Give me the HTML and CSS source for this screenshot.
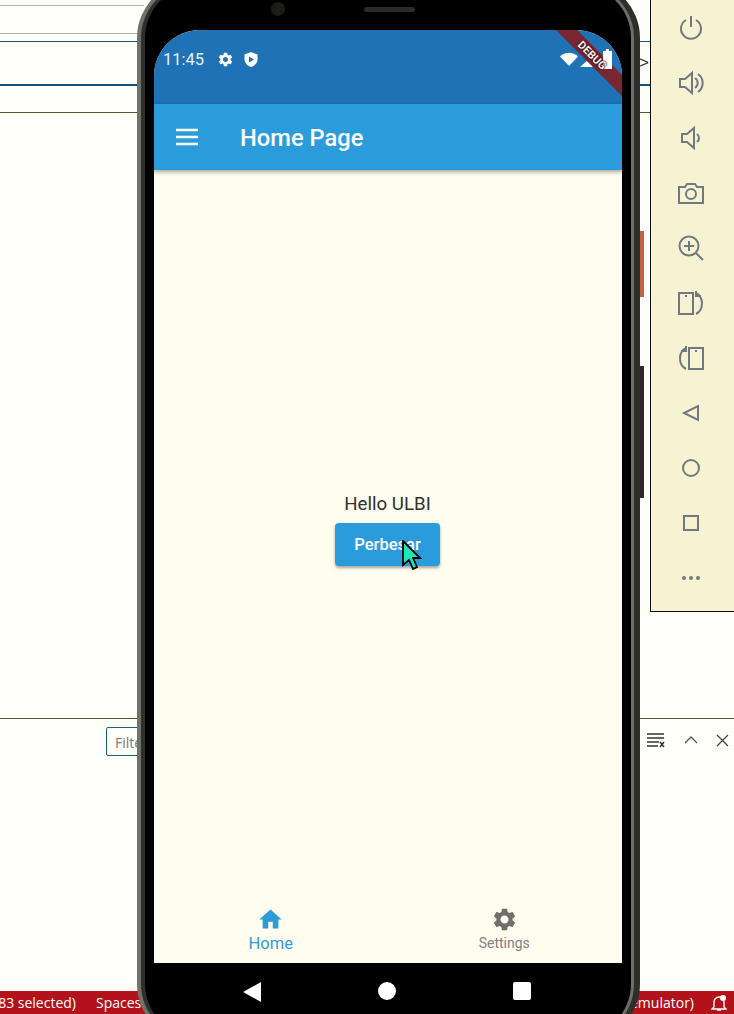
FILE: index.html
```html
<!DOCTYPE html>
<html>
<head>
  <meta name="viewport" content="width=device-width, initial-scale=1.0">
  <title>Home Page</title>
  <link rel="stylesheet" href="styles.css">
</head>
<body>
  <svg class="defs" width="0" height="0">
    <symbol id="gear" viewBox="0 0 24 24"><path d="M19.14 12.94c.04-.3.06-.61.06-.94 0-.32-.02-.64-.07-.94l2.03-1.58c.18-.14.23-.41.12-.61l-1.92-3.32c-.12-.22-.37-.29-.59-.22l-2.39.96c-.5-.38-1.03-.7-1.62-.94l-.36-2.54c-.04-.24-.24-.41-.48-.41h-3.84c-.24 0-.43.17-.47.41l-.36 2.54c-.59.24-1.13.57-1.62.94l-2.39-.96c-.22-.08-.47 0-.59.22L2.74 8.87c-.12.21-.08.47.12.61l2.03 1.58c-.05.3-.09.63-.09.94s.02.64.07.94l-2.03 1.58c-.18.14-.23.41-.12.61l1.92 3.32c.12.22.37.29.59.22l2.39-.96c.5.38 1.03.7 1.62.94l.36 2.54c.05.24.24.41.48.41h3.84c.24 0 .44-.17.47-.41l.36-2.54c.59-.24 1.13-.56 1.62-.94l2.39.96c.22.08.47 0 .59-.22l1.92-3.32c.12-.22.07-.47-.12-.61l-2.01-1.58zM12 15.6c-1.98 0-3.6-1.62-3.6-3.6s1.62-3.6 3.6-3.6 3.6 1.62 3.6 3.6-1.62 3.6-3.6 3.6z"/></symbol>
  </svg>

  <div class="desktop">

    <!-- editor behind the emulator -->
    <div class="ide">
      <div class="rule rule-gray h5"></div>
      <div class="rule rule-gray h28"></div>
      <div class="rule rule-blue h8"></div>
      <div class="rule rule-thick h43"><span class="chevron">&gt;</span></div>
      <div class="rule rule-olive h27"></div>
      <div class="rule rule-olive editor"></div>
      <div class="panel-bar">
        <div class="filter">Filter</div>
        <div class="panel-icons">
          <svg width="20" height="16" viewBox="0 0 20 16"><path d="M1 2h17M1 6h17M1 10h12M1 14h11" stroke="#333" stroke-width="1.3"/><path d="M14 10l4 5M18 10l-4 5" stroke="#333" stroke-width="1.5"/></svg>
          <svg width="14" height="10" viewBox="0 0 14 10"><path d="M1 8l6-6 6 6" fill="none" stroke="#555" stroke-width="1.3"/></svg>
          <svg width="13" height="13" viewBox="0 0 13 13"><path d="M1 1l11 11M12 1L1 12" stroke="#444" stroke-width="1.3"/></svg>
        </div>
      </div>
      <div class="statusbar">
        <div class="status-left"><span>(83 selected)</span><span>Spaces: 2</span></div>
        <div class="status-right">
          <span>(emulator)</span>
          <svg width="16" height="18" viewBox="0 0 16 18"><path d="M3 13V8a5 5 0 0 1 10 0v5l2 2H1zM6 16h4" fill="none" stroke="#fff" stroke-width="1.4"/><circle cx="12" cy="4" r="3" fill="#fff"/></svg>
        </div>
      </div>
    </div>

    <div class="side-btn power"></div>
    <div class="side-btn volume"></div>

    <div class="phone">
      <div class="phone-rim">
        <div class="phone-body">
          <div class="screen">
            <div class="status">
              <span class="clock">11:45</span>
              <svg width="17" height="17"><use href="#gear" fill="#fff"/></svg>
              <svg width="16" height="17" viewBox="0 0 16 17"><path d="M8 1l6.500 2.500v5c0 3.500-2.800 6.300-6.500 7.500-3.700-1.200-6.500-4-6.500-7.500v-5z" fill="#fff"/><path d="M6 5.500v6l5-3z" fill="#1f72b5"/></svg>
              <div class="st-right">
                <svg width="18" height="14" viewBox="0 0 18 14"><path d="M0 4.500C5 -.5 13 -.5 18 4.500L9 14z" fill="#fff"/></svg>
                <svg class="signal" width="18" height="16" viewBox="0 0 18 16"><path d="M18 0v16H0z" fill="#fff"/></svg>
                <svg class="battery" width="9" height="20" viewBox="0 0 9 20"><path d="M3 0h3v2h3v18H0V2h3z" fill="#fff"/></svg>
              </div>
            </div>
            <div class="debug-band"></div>
            <div class="debug">DEBUG</div>
            <div class="appbar">
              <svg width="24" height="18" viewBox="0 0 24 18"><path d="M1 2h22M1 9h22M1 16h22" stroke="#fff" stroke-width="2.300"/></svg>
              <span class="appbar-title">Home Page</span>
            </div>
            <div class="content">
              <p class="hello">Hello ULBI</p>
              <button class="grow-btn">Perbesar</button>
            </div>
            <div class="bottom-nav">
              <div class="nav-item active">
                <svg width="27" height="27" viewBox="0 0 24 24"><path d="M10 20v-6h4v6h5v-8h3L12 3 2 12h3v8z" fill="#2f9bd6"/></svg>
                <span>Home</span>
              </div>
              <div class="nav-item">
                <svg width="27" height="27"><use href="#gear" fill="#6f6f68"/></svg>
                <span>Settings</span>
              </div>
            </div>
          </div>
          <div class="softkeys">
            <svg width="18" height="20" viewBox="0 0 18 20"><path d="M18 0v20L0 10z" fill="#fff"/></svg>
            <svg width="18" height="18" viewBox="0 0 18 18"><circle cx="9" cy="9" r="9" fill="#fff"/></svg>
            <svg width="18" height="18" viewBox="0 0 18 18"><rect width="18" height="18" rx="2" fill="#fff"/></svg>
          </div>
        </div>
      </div>
      <div class="camera"></div>
      <div class="speaker"></div>
    </div>

    <!-- emulator side toolbar -->
    <div class="toolbar">
      <svg viewBox="0 0 26 26"><path d="M8 5a10 10 0 1 0 10 0M13 1v11"/></svg>
      <svg viewBox="0 0 26 26"><path d="M2 9v8h5l7 6V3L7 9zM17 8a6 6 0 0 1 0 10M20 4a11 11 0 0 1 0 18"/></svg>
      <svg viewBox="0 0 26 26"><path d="M4 9v8h5l7 6V3L9 9zM19 9a5 5 0 0 1 0 8"/></svg>
      <svg viewBox="0 0 26 26"><path d="M1 7h6l2-3h8l2 3h6v16H1z"/><circle cx="13" cy="14" r="5"/></svg>
      <svg viewBox="0 0 26 26"><circle cx="11" cy="11" r="9.500"/><path d="M11 6v10M6 11h10M18 18l7 7"/></svg>
      <svg viewBox="0 0 26 26"><path d="M1 3h14v21H1zM7 6h2M18 3c8 4 8 17 0 21M18 1v5h5"/></svg>
      <svg viewBox="0 0 26 26"><path d="M11 3h14v21H11zM17 6h2M8 3c-8 4-8 17 0 21M8 1v5H3"/></svg>
      <svg viewBox="0 0 26 26"><path d="M20 6v14L6 13z"/></svg>
      <svg viewBox="0 0 26 26"><circle cx="13" cy="13" r="8"/></svg>
      <svg viewBox="0 0 26 26"><rect x="6" y="6" width="14" height="14"/></svg>
      <svg viewBox="0 0 26 26"><circle class="dot" cx="6" cy="13" r="2"/><circle class="dot" cx="13" cy="13" r="2"/><circle class="dot" cx="20" cy="13" r="2"/></svg>
    </div>

    <svg class="cursor" width="20" height="30" viewBox="0 0 20 30"><path d="M1 1l17 17h-7l4 9-4 2-4-9-6 5z" fill="#1de9b6" stroke="#000" stroke-width="1.800"/></svg>
  </div>
</body>
</html>
```

FILE: styles.css
```css
* { box-sizing: border-box; }
body {
  margin: 0;
  font-family: Roboto, Arial, sans-serif;
  background-color: #fffffa;
}
.defs { position: absolute; }
.desktop {
  position: relative;
  width: 734px;
  height: 1014px;
  overflow: hidden;
}

/* editor */
.ide {
  display: flex;
  flex-direction: column;
  height: 100%;
}
.rule { display: flex; align-items: center; justify-content: flex-end; }
.rule-gray { border-bottom: 1px solid #b5b2a8; margin-right: 590px; }
.rule-blue { border-bottom: 1px solid #14527a; }
.rule-thick { border-bottom: 2px solid #14527a; }
.rule-olive { border-bottom: 1px solid #57532c; }
.h5 { height: 6px; }
.h28 { height: 28px; }
.h8 { height: 8px; }
.h43 { height: 44px; }
.h27 { height: 27px; }
.editor { height: 606px; }
.chevron {
  font-family: "Liberation Sans", sans-serif;
  font-size: 17px;
  color: #333;
  margin-right: 85px;
}
.panel-bar {
  display: flex;
  justify-content: space-between;
  height: 272px;
  padding: 8px 5px 0 106px;
}
.filter {
  width: 200px;
  height: 29px;
  padding: 5px 8px;
  border: 1px solid #1f5f7a;
  border-radius: 2px;
  font-family: "Open Sans", sans-serif;
  font-size: 14px;
  color: #777;
}
.panel-icons {
  display: flex;
  align-items: center;
  gap: 18px;
  height: 26px;
}
.statusbar {
  display: flex;
  justify-content: space-between;
  align-items: center;
  flex: 1;
  padding-right: 7px;
  margin-left: -6px;
  background-color: #b3121a;
  font-family: "Open Sans", sans-serif;
  font-size: 14px;
  color: #fff;
}
.status-left { display: flex; gap: 20px; }
.status-right { display: flex; align-items: center; gap: 17px; }

/* phone */
.side-btn { position: absolute; left: 638px; width: 6px; }
.power { top: 231px; height: 66px; background-color: #c8603f; }
.volume { top: 366px; height: 132px; background-color: #2a2a28; }
.phone {
  position: absolute;
  left: 137px;
  top: -20px;
  width: 503px;
  height: 1062px;
  padding: 3px 6px 3px 4px;
  border-radius: 58px;
  background: linear-gradient(90deg, #70706c 50%, #2e2e2a 50%);
}
.phone-rim {
  height: 100%;
  padding: 2px 3px 2px 4px;
  border-radius: 55px;
  background: linear-gradient(90deg, #2e2e2a 50%, #6e6e6a 50%);
}
.phone-body {
  height: 100%;
  padding: 45px 9px 0 9px;
  border-radius: 53px;
  background-color: #000;
}
.camera {
  position: absolute;
  left: 134px;
  top: 22px;
  width: 14px;
  height: 14px;
  border-radius: 50%;
  background-color: #1d1d18;
}
.speaker {
  position: absolute;
  left: 227px;
  top: 27px;
  width: 51px;
  height: 5px;
  border-radius: 3px;
  background-color: #2b2b2b;
}
.screen {
  position: relative;
  display: flex;
  flex-direction: column;
  height: 933px;
  border-radius: 46px 46px 0 0;
  overflow: hidden;
  background-color: #fffdf0;
}
.status {
  display: flex;
  align-items: center;
  gap: 9px;
  height: 74px;
  padding: 0 10px 16px 9px;
  background-color: #1f72b5;
  color: #e8f1f8;
}
.clock { font-size: 16.500px; margin-right: 4px; }
.st-right { display: flex; align-items: center; gap: 2px; margin-left: auto; }
.signal { margin-right: 2px; }
.battery { position: relative; z-index: 2; margin-left: 1px; }
.debug-band, .debug {
  position: absolute;
  top: 18px;
  right: -35px;
  width: 130px;
  height: 15px;
  transform: rotate(45deg);
}
.debug-band { z-index: 1; background-color: #7a2630; }
.debug {
  z-index: 3;
  color: #eee;
  font-size: 11px;
  font-weight: 700;
  line-height: 15px;
  text-align: center;
  text-shadow: 0 0 1px #3f1016, 0 0 2px #3f1016, 0 0 2px #3f1016;
}
.appbar {
  position: relative;
  display: flex;
  align-items: center;
  gap: 41px;
  height: 66px;
  padding-left: 21px;
  background-color: #2b9cdb;
  box-shadow: 0 2px 4px rgba(0, 0, 0, 0.35);
}
.appbar-title {
  font-size: 23.700px;
  font-weight: 500;
  color: #fff;
  padding-top: 2px;
}
.content {
  display: flex;
  flex: 1;
  flex-direction: column;
  align-items: center;
  justify-content: center;
  padding: 0 1px 4px 0;
}
.hello {
  margin: 0 0 8px;
  font-size: 18.700px;
  color: #303030;
}
.grow-btn {
  width: 105px;
  height: 43px;
  border: none;
  border-radius: 4px;
  background-color: #2b9cdb;
  box-shadow: 0 2px 3px rgba(0, 0, 0, 0.35);
  color: #fff;
  font-family: Roboto, sans-serif;
  font-size: 16.500px;
  font-weight: 500;
}
.bottom-nav { display: flex; height: 70px; padding-right: 1px; }
.nav-item {
  display: flex;
  flex: 1;
  flex-direction: column;
  align-items: center;
  padding-top: 13px;
  color: #808080;
  font-size: 14px;
}
.nav-item span { margin-top: 2px; }
.nav-item.active { color: #2f9bd6; font-size: 16.500px; }
.nav-item.active span { margin-top: 1px; }
.softkeys {
  display: flex;
  justify-content: space-between;
  padding: 19px 91px 0 89px;
}

/* toolbar */
.toolbar {
  position: absolute;
  left: 650px;
  top: -3px;
  display: flex;
  flex-direction: column;
  align-items: center;
  gap: 29px;
  width: 84px;
  height: 615px;
  padding: 18px 4px 0 0;
  border-left: 1px solid #111;
  border-bottom: 1px solid #111;
  background-color: #f7f3d2;
}
.toolbar svg {
  flex: none;
  width: 26px;
  height: 26px;
  fill: none;
  stroke: #6f7a80;
  stroke-width: 2;
}
.toolbar .dot { fill: #6f7a80; stroke: none; }
.cursor { position: absolute; left: 402px; top: 540px; }
```
